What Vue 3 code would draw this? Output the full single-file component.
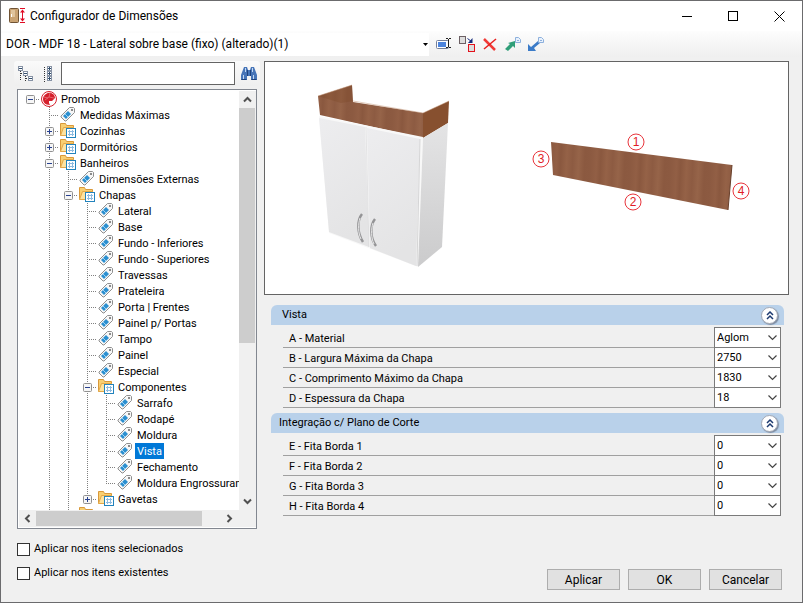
<template>
    <div class="window">
        <header class="titlebar">
            <svg class="app-icon" width="18" height="18" viewBox="0 0 18 18">
                <rect x="0.5" y="1.5" width="9" height="14" rx="1" fill="#c9a373" stroke="#6f5334" />
                <rect x="2" y="3" width="4" height="7" fill="#e0c49c" />
                <rect x="2" y="7" width="1" height="3" fill="#fff" />
                <path d="M11 1.5h5M11 15.5h5M13.5 3v11" stroke="#e00b24" fill="none" />
                <path d="M11 5.5l2.5-3 2.5 3zM11 11.5l2.5 3 2.5-3z" fill="#e00b24" />
            </svg>
            <h1>Configurador de Dimensões</h1>
            <button class="caption" aria-label="Minimizar">
                <svg width="11" height="11"><path d="M0 5.5h10" stroke="#000" /></svg>
            </button>
            <button class="caption" aria-label="Maximizar">
                <svg width="11" height="11"><rect x="0.5" y="0.5" width="9" height="9" fill="none" stroke="#000" /></svg>
            </button>
            <button class="caption" aria-label="Fechar">
                <svg width="11" height="11"><path d="M0.5 0.5l10 10M10.5 0.5l-10 10" stroke="#000" /></svg>
            </button>
        </header>

        <div class="toolbar">
            <div class="model">
                <select v-model="model" aria-label="Modelo">
                    <option>DOR - MDF 18 - Lateral sobre base (fixo) (alterado)(1)</option>
                </select>
                <svg class="arrow" width="5" height="3"><path d="M0 0h5L2.5 3z" /></svg>
            </div>
            <button aria-label="Renomear">
                <svg width="16" height="16">
                    <rect x="0.5" y="4.5" width="12" height="8" rx="1" fill="#fff" stroke="#75809a" />
                    <rect x="2" y="6" width="8" height="5" fill="#4c84dd" />
                    <path d="M10 2.5h2M13 2.5h2M12.5 3v8M10 11.5h2M13 11.5h2" stroke="#222" />
                </svg>
            </button>
            <button aria-label="Duplicar">
                <svg width="16" height="16">
                    <rect x="0.5" y="0.5" width="6" height="7" fill="#ddd" stroke="#6c6064" />
                    <path d="M8.5 2.5l4 3" fill="none" stroke="#152a7c" />
                    <path d="M13.5 2v5H9z" fill="#152a7c" />
                    <rect x="9.5" y="8.5" width="6" height="7" fill="#ddd" stroke="#e3111b" />
                </svg>
            </button>
            <button aria-label="Excluir">
                <svg width="16" height="16">
                    <path d="M2 3l11 11" stroke="#f03a36" stroke-width="2.5" />
                    <path d="M14 3L2 13" stroke="#e8201f" stroke-width="1.5" />
                </svg>
            </button>
            <button v-for="io in transfers" :key="io.name" :aria-label="io.name">
                <svg width="16" height="16">
                    <path :d="io.arrow" :fill="io.color" />
                    <path d="M10.5 1.5h3l2 2v3h-5z" fill="#e8f1fc" stroke="#8db0dd" />
                    <path d="M12 4.5h2" stroke="#8db0dd" />
                </svg>
            </button>
        </div>

        <main class="body">
            <section class="side">
                <div class="search">
                    <button aria-label="Expandir tudo">
                        <svg width="16" height="16">
                            <path d="M2.5 5v10M7.5 8v8M3 7.5h2M8 12.5h2" stroke="#333" stroke-dasharray="1 1" />
                            <g fill="#fff" stroke="#8792a4">
                                <rect x="0.5" y="0.5" width="4" height="4" />
                                <rect x="5.5" y="5.5" width="4" height="4" />
                                <rect x="10.5" y="10.5" width="4" height="4" />
                            </g>
                            <path d="M1 2.5h3M6 7.5h3M11 12.5h3" stroke="#33506f" />
                        </svg>
                    </button>
                    <button aria-label="Recolher tudo">
                        <svg width="16" height="16">
                            <path d="M4.5 1v15" stroke="#333" stroke-dasharray="1 1" />
                            <g fill="#fff" stroke="#8792a4">
                                <rect x="7.5" y="0.5" width="4" height="4" />
                                <rect x="7.5" y="5.5" width="4" height="4" />
                                <rect x="7.5" y="10.5" width="4" height="4" />
                            </g>
                            <path d="M8 2.5h3M8 7.5h3M8 12.5h3M9.5 1v3M9.5 6v3M9.5 11v3" stroke="#33506f" />
                        </svg>
                    </button>
                    <input v-model="query" type="text" aria-label="Pesquisar">
                    <button aria-label="Localizar">
                        <svg width="16" height="16">
                            <path d="M3 1h3l1 3h2l1-3h3l3 8v5h-6v-4H6v4H0V9z" fill="#4775b8" />
                            <path d="M6.5 4v6M9.5 4v6M0.5 13.5h5M10.5 13.5h5" stroke="#1f427c" />
                            <path d="M2.5 9v4M12.5 9v4M4.5 2v4M11.5 2v4" stroke="#c3d8f2" />
                        </svg>
                    </button>
                </div>

                <div class="tree">
                    <ul>
                        <li v-for="(node, i) in nodes" :key="i">
                            <span
                                v-for="(guide, column) in node.guides"
                                :key="column"
                                class="guide"
                                :class="guide"
                            >
                                <button
                                    v-if="column === node.level && node.mark"
                                    class="toggle"
                                    :aria-label="node.mark === '+' ? 'Expandir' : 'Recolher'"
                                >
                                    <svg width="9" height="9">
                                        <rect x="0.5" y="0.5" width="8" height="8" rx="1" fill="#f6f6f6" stroke="#919191" />
                                        <path :d="node.mark === '+' ? 'M2 4.5h5M4.5 2v5' : 'M2 4.5h5'" stroke="#27408f" />
                                    </svg>
                                </button>
                            </span>
                            <svg v-if="node.icon === 'root'" class="icon" width="16" height="16">
                                <circle cx="8" cy="8" r="7.5" fill="#fff" stroke="#d51f2c" />
                                <path d="M5 3c4-3 9 0 9 4l-3 3H8v2l1 2c-5 0-7-3-7-6 0-2 1-4 3-5z" fill="#d51f2c" />
                                <path d="M9 2l-1 4-4 3M8 6l5 1M3 6l4 1" fill="none" stroke="#f3a5a9" stroke-width="0.5" />
                            </svg>
                            <svg v-else-if="node.icon === 'folder'" class="icon" width="16" height="16">
                                <path d="M0.5 12.5v-12h5l1 2h7v4" fill="#f8cf72" stroke="#d9993a" />
                                <path d="M0.5 12.5l3-8h10v8z" fill="#fde3a0" stroke="#e3a848" />
                                <rect x="6.5" y="5.5" width="9" height="9" fill="#fff" stroke="#2283bd" />
                                <path d="M8 8.5h6M8 11.5h6M9.5 7v6M12.5 7v6" stroke="#8dbbe0" />
                            </svg>
                            <svg v-else class="icon" width="16" height="16">
                                <path d="M9.5 0.5h4l1 1v4L6 14H5l-4-4V9z" fill="#f7f7f7" stroke="#8f8f8f" />
                                <path d="M8 4l3 3-5 5-3-3z" fill="#2b8fd0" />
                                <path d="M5 7l3 3" stroke="#9bd0f2" />
                                <rect x="11.5" y="2.5" width="1" height="1" fill="#fff" stroke="#8a8a8a" />
                            </svg>
                            <span class="label" :class="{ selected: node.text === selected }">{{ node.text }}</span>
                        </li>
                    </ul>
                    <div class="vbar">
                        <button aria-label="Rolar para cima"><svg width="9" height="9"><path d="M1 6.5l3.5-3.5 3.5 3.5" /></svg></button>
                        <div class="thumb"></div>
                        <button aria-label="Rolar para baixo"><svg width="9" height="9"><path d="M1 2.5l3.5 3.5 3.5-3.5" /></svg></button>
                    </div>
                    <div class="hbar">
                        <button aria-label="Rolar para a esquerda"><svg width="9" height="9"><path d="M6.5 1l-3.5 3.5 3.5 3.5" /></svg></button>
                        <div class="thumb"></div>
                        <button aria-label="Rolar para a direita"><svg width="9" height="9"><path d="M2.5 1l3.5 3.5-3.5 3.5" /></svg></button>
                    </div>
                </div>

                <div class="checks">
                    <label><input v-model="applySelected" type="checkbox">Aplicar nos itens selecionados</label>
                    <label><input v-model="applyExisting" type="checkbox">Aplicar nos itens existentes</label>
                </div>
            </section>

            <section class="details">
                <div class="preview">
                    <svg viewBox="265 62 523 232">
                        <defs>
                            <linearGradient id="wood" gradientUnits="userSpaceOnUse" x1="318" y1="0" x2="358" y2="2" spreadMethod="repeat">
                                <stop offset="0" stop-color="#8c5a41" />
                                <stop offset="0.15" stop-color="#925f45" />
                                <stop offset="0.25" stop-color="#8a583f" />
                                <stop offset="0.4" stop-color="#956247" />
                                <stop offset="0.55" stop-color="#8d5b42" />
                                <stop offset="0.7" stop-color="#966449" />
                                <stop offset="0.85" stop-color="#8b5940" />
                                <stop offset="1" stop-color="#8c5a41" />
                            </linearGradient>
                            <linearGradient id="door" x1="0" y1="0" x2="0.3" y2="1">
                                <stop offset="0" stop-color="#ededef" />
                                <stop offset="1" stop-color="#e4e4e5" />
                            </linearGradient>
                            <linearGradient id="flank" x1="0" y1="0" x2="0" y2="1">
                                <stop offset="0" stop-color="#e4e4e5" />
                                <stop offset="1" stop-color="#cbcbcc" />
                            </linearGradient>
                        </defs>

                        <!-- armário -->
                        <path d="M318 96l34-11 1 17 70 11v25L320 115z" fill="url(#wood)" />
                        <path d="M318 96l34-11 1 16-12 2z" fill="#7a4526" opacity="0.3" />
                        <path d="M423 113l26-12-1 22-25 15z" fill="#87502f" />
                        <path d="M318 96l34-11M353 101l70 12 26-12" fill="none" stroke="#c79c80" stroke-width="0.5" />
                        <path d="M319 116l104 21-5 130-89-34z" fill="#f8f8f8" />
                        <path d="M319 118l46 9 4 120-40-15z" fill="url(#door)" />
                        <path d="M367 128l53 11-4 127-46-18z" fill="url(#door)" />
                        <path d="M423 138l25-15-6 124-24 20z" fill="url(#flank)" />
                        <path d="M420 139l-3 127" stroke="#d5d5d6" />
                        <path d="M366 127l3 120" stroke="#cfcfd0" stroke-width="0.5" />
                        <path d="M362 214c-5 6-5 19 1 28" fill="none" stroke="#949496" stroke-width="2.5" />
                        <path d="M375 219c-5 6-5 19 1 27" fill="none" stroke="#949496" stroke-width="2.5" />
                        <path d="M360 218c-2 6-2 15 1 21M373 223c-2 6-2 15 1 21" fill="none" stroke="#e9e9ea" />

                        <!-- peça com as bordas numeradas -->
                        <path d="M551 142l181 23-4 45-175-35z" fill="url(#wood)" />
                        <path d="M732 165l-4 45" stroke="#69402c" />
                        <g v-for="edge in edges" :key="edge.n">
                            <circle :cx="edge.x" :cy="edge.y" r="8" fill="#fff" stroke="#e8353c" />
                            <text :x="edge.x" :y="edge.y + 4">{{ edge.n }}</text>
                        </g>
                    </svg>
                </div>

                <div class="groups">
                    <section v-for="group in groups" :key="group.title" class="group">
                        <h2 :class="{ inset: group.inset }">
                            {{ group.title }}
                            <button aria-label="Recolher grupo">
                                <svg width="8" height="9"><path d="M1 4l3-3 3 3M1 8l3-3 3 3" fill="none" stroke="#1d3a70" stroke-width="1.5" /></svg>
                            </button>
                        </h2>
                        <div class="fields">
                            <div v-for="field in group.fields" :key="field.id" class="field">
                                <label :for="field.id">{{ field.label }}</label>
                                <div class="combo">
                                    <select :id="field.id" v-model="field.value">
                                        <option>{{ field.value }}</option>
                                    </select>
                                    <svg class="arrow" width="9" height="6"><path d="M0.5 0.5l4 4 4-4" fill="none" stroke="#444" stroke-width="1.2" /></svg>
                                </div>
                            </div>
                        </div>
                    </section>
                </div>

                <footer class="actions">
                    <button>Aplicar</button>
                    <button>OK</button>
                    <button>Cancelar</button>
                </footer>
            </section>
        </main>
    </div>
</template>

<script setup>
import { computed, reactive, ref } from "vue";

const model = ref('DOR - MDF 18 - Lateral sobre base (fixo) (alterado)(1)');
const query = ref('');
const selected = ref('Vista');
const applySelected = ref(false);
const applyExisting = ref(false);

const transfers = [
    { name: 'Exportar', color: '#2f9e78', arrow: 'M0 13l5-5-2-1 7-2v7l-2-2-5 5z' },
    { name: 'Importar', color: '#3b7bc8', arrow: 'M10 5l2 2-6 5 2 3H0V8l3 3z' },
];

const edges = [
    { n: 1, x: 636, y: 142 },
    { n: 2, x: 633, y: 202 },
    { n: 3, x: 541, y: 159 },
    { n: 4, x: 741, y: 191 },
];

// [nível, texto, ícone, marcador]
const items = [
    [0, 'Promob', 'root', '-'],
    [1, 'Medidas Máximas', 'tag'],
    [1, 'Cozinhas', 'folder', '+'],
    [1, 'Dormitórios', 'folder', '+'],
    [1, 'Banheiros', 'folder', '-'],
    [2, 'Dimensões Externas', 'tag'],
    [2, 'Chapas', 'folder', '-'],
    [3, 'Lateral', 'tag'],
    [3, 'Base', 'tag'],
    [3, 'Fundo - Inferiores', 'tag'],
    [3, 'Fundo - Superiores', 'tag'],
    [3, 'Travessas', 'tag'],
    [3, 'Prateleira', 'tag'],
    [3, 'Porta | Frentes', 'tag'],
    [3, 'Painel p/ Portas', 'tag'],
    [3, 'Tampo', 'tag'],
    [3, 'Painel', 'tag'],
    [3, 'Especial', 'tag'],
    [3, 'Componentes', 'folder', '-'],
    [4, 'Sarrafo', 'tag'],
    [4, 'Rodapé', 'tag'],
    [4, 'Moldura', 'tag'],
    [4, 'Vista', 'tag'],
    [4, 'Fechamento', 'tag'],
    [4, 'Moldura Engrossuram', 'tag'],
    [3, 'Gavetas', 'folder', '+'],
    [2, '', 'folder', '+'],
    [1, '', 'folder', '+'],
];

// Verifica se ainda existe um irmão abaixo no mesmo nível
const continues = (index, level) => {
    const next = items.slice(index + 1).find(([l]) => l <= level);
    return next !== undefined && next[0] === level;
};

const nodes = computed(() => items.map(([level, text, icon, mark], index) => {
    const guides = [];
    for (let column = 0; column <= level; column++) {
        const more = continues(index, column);
        if (column < level) {
            guides.push(more ? 'line' : '');
        } else if (level === 0) {
            guides.push('dash');
        } else {
            guides.push(more ? 'tee' : 'corner');
        }
    }
    return { level, text, icon, mark, guides };
}));

const groups = reactive([
    {
        title: 'Vista',
        inset: true,
        fields: [
            { id: 'a', label: 'A - Material', value: 'Aglom' },
            { id: 'b', label: 'B - Largura Máxima da Chapa', value: '2750' },
            { id: 'c', label: 'C - Comprimento Máximo da Chapa', value: '1830' },
            { id: 'd', label: 'D - Espessura da Chapa', value: '18' },
        ],
    },
    {
        title: 'Integração c/ Plano de Corte',
        inset: false,
        fields: [
            { id: 'e', label: 'E - Fita Borda 1', value: '0' },
            { id: 'f', label: 'F - Fita Borda 2', value: '0' },
            { id: 'g', label: 'G - Fita Borda 3', value: '0' },
            { id: 'h', label: 'H - Fita Borda 4', value: '0' },
        ],
    },
]);
</script>

<style>
body {
    margin: 0;
}
</style>

<style scoped>
.window {
    height: 100vh;
    display: flex;
    flex-direction: column;
    box-sizing: border-box;
    border: 1px solid #6b6b6d;
    background: #f0f0f0;
    color: #000;
    font: 11px/16px Roboto, "Liberation Sans", sans-serif;
}

button, input, select {
    margin: 0;
    padding: 0;
    border: none;
    border-radius: 0;
    background: none;
    color: inherit;
    font: inherit;
    box-sizing: border-box;
}

button {
    display: flex;
    align-items: center;
    justify-content: center;
}

select {
    appearance: none;
    width: 100%;
}

svg {
    display: block;
    flex-shrink: 0;
}

.titlebar {
    height: 30px;
    display: flex;
    align-items: center;
    padding-left: 8px;
    background: #fff;
}

.titlebar h1 {
    flex: 1;
    margin: 0 0 0 3px;
    font-size: 12px;
    font-weight: 400;
}

.caption {
    width: 46px;
    height: 30px;
}

.toolbar {
    height: 26px;
    display: flex;
    align-items: center;
    gap: 7px;
    background: linear-gradient(#fdfdfd, #efefef);
}

.model {
    position: relative;
    width: 428px;
    height: 23px;
    background: #fff;
}

.model select {
    height: 23px;
    padding-left: 5px;
    font-size: 12px;
}

.model .arrow {
    position: absolute;
    right: 1px;
    top: 10px;
    pointer-events: none;
}

.toolbar button {
    width: 16px;
    height: 16px;
}

.body {
    flex: 1;
    min-height: 0;
    display: flex;
    gap: 4px;
    padding: 4px 13px 12px;
}

.side {
    width: 246px;
    flex-shrink: 0;
    display: flex;
    flex-direction: column;
}

.search {
    height: 25px;
    display: flex;
    align-items: center;
    gap: 5px;
    padding: 0 3px;
    border-radius: 3px;
    background: linear-gradient(#fafafa, #efefef);
}

.search button {
    width: 17px;
    height: 16px;
}

.search input {
    flex: 1;
    min-width: 0;
    height: 23px;
    padding: 0 4px;
    border: 1px solid #646464;
    background: #fff;
}

.tree {
    flex: 1;
    min-height: 0;
    display: grid;
    grid-template: minmax(0, 1fr) 17px / minmax(0, 1fr) 17px;
    margin: 3px 3px 0;
    padding: 1px 0 1px 1px;
    border: 1px solid #828790;
    background: #fff;
}

.tree ul {
    margin: 0;
    padding: 0 0 0 2px;
    overflow: hidden;
    list-style: none;
}

.tree li {
    height: 16px;
    display: flex;
    align-items: center;
    white-space: nowrap;
}

.guide {
    width: 19px;
    height: 16px;
    flex-shrink: 0;
    display: flex;
    align-items: center;
    justify-content: center;
    background-repeat: no-repeat;
}

.line, .tee, .corner {
    background-image: repeating-linear-gradient(#808080 0 1px, transparent 1px 2px);
    background-position: 9px 0;
    background-size: 1px 16px;
}

.tee, .corner, .dash {
    background-image:
        repeating-linear-gradient(#808080 0 1px, transparent 1px 2px),
        repeating-linear-gradient(90deg, #808080 0 1px, transparent 1px 2px);
    background-position: 9px 0, 9px 8px;
    background-size: 1px 16px, 10px 1px;
}

.corner {
    background-size: 1px 8px, 10px 1px;
}

.dash {
    background-size: 0 0, 10px 1px;
}

.toggle {
    width: 9px;
    height: 9px;
}

.icon {
    margin: 0 2px 0 1px;
}

.label {
    height: 16px;
    padding: 1px 2px 0;
    box-sizing: border-box;
}

.selected {
    background: #0078d7;
    color: #fff;
}

.vbar, .hbar {
    display: flex;
    background: #f0f0f0;
}

.vbar {
    flex-direction: column;
    padding-right: 1px;
}

.hbar {
    grid-column: 1 / 3;
    padding: 1px 18px 1px 0;
}

.vbar button, .hbar button {
    width: 16px;
    height: 17px;
    flex-shrink: 0;
}

.vbar path, .hbar path {
    fill: none;
    stroke: #505050;
    stroke-width: 2;
}

.hbar button {
    width: 17px;
    height: 15px;
}

.thumb {
    background: #cdcdcd;
}

.vbar .thumb {
    height: 56%;
    margin-bottom: auto;
}

.hbar .thumb {
    width: 76%;
    margin-right: auto;
}

.checks {
    display: flex;
    flex-direction: column;
    gap: 8px;
    margin: 12px 3px 9px;
}

.checks label {
    display: flex;
    align-items: center;
    gap: 4px;
}

.checks input {
    appearance: none;
    width: 13px;
    height: 13px;
    border: 1px solid #333;
    background: #fff;
}

.details {
    flex: 1;
    min-width: 0;
    display: flex;
    flex-direction: column;
}

.preview {
    border: 1px solid #646464;
    background: #fff;
}

.preview svg {
    width: 100%;
}

.preview text {
    fill: #e11c25;
    font: 12px "Liberation Sans", Arial, sans-serif;
    text-anchor: middle;
}

.groups {
    flex: 1;
    display: flex;
    flex-direction: column;
    gap: 5px;
    padding: 10px 5px 0 7px;
}

.group h2 {
    height: 20px;
    display: flex;
    align-items: center;
    justify-content: space-between;
    margin: 0;
    padding: 0 6px 0 8px;
    border-radius: 6px 6px 0 0;
    background: #b9d1ea;
    font-size: 11px;
    font-weight: 400;
}

.group .inset {
    padding-left: 11px;
}

.group h2 button {
    width: 17px;
    height: 17px;
    border: 1px solid #a3a9b5;
    border-radius: 50%;
    background: #fff;
    box-shadow: 1px 1px 1px #7d8ba0;
}

.fields {
    padding: 3px 3px 0 12px;
}

.field {
    height: 20px;
    display: flex;
    align-items: center;
    box-sizing: border-box;
    border-bottom: 1px solid #a0a0a0;
}

.field label {
    flex: 1;
    padding: 2px 0 0 6px;
}

.combo {
    position: relative;
    width: 67px;
    height: 21px;
}

.combo select {
    height: 21px;
    padding: 0 16px 0 2px;
    border: 1px solid #7a7a7a;
    background: #fff;
}

.combo .arrow {
    position: absolute;
    right: 4px;
    top: 8px;
    pointer-events: none;
}

.actions {
    display: flex;
    justify-content: flex-end;
    gap: 8px;
    padding-right: 7px;
}

.actions button {
    width: 73px;
    height: 21px;
    border: 1px solid #adadad;
    background: #e1e1e1;
    font-size: 12px;
}
</style>
